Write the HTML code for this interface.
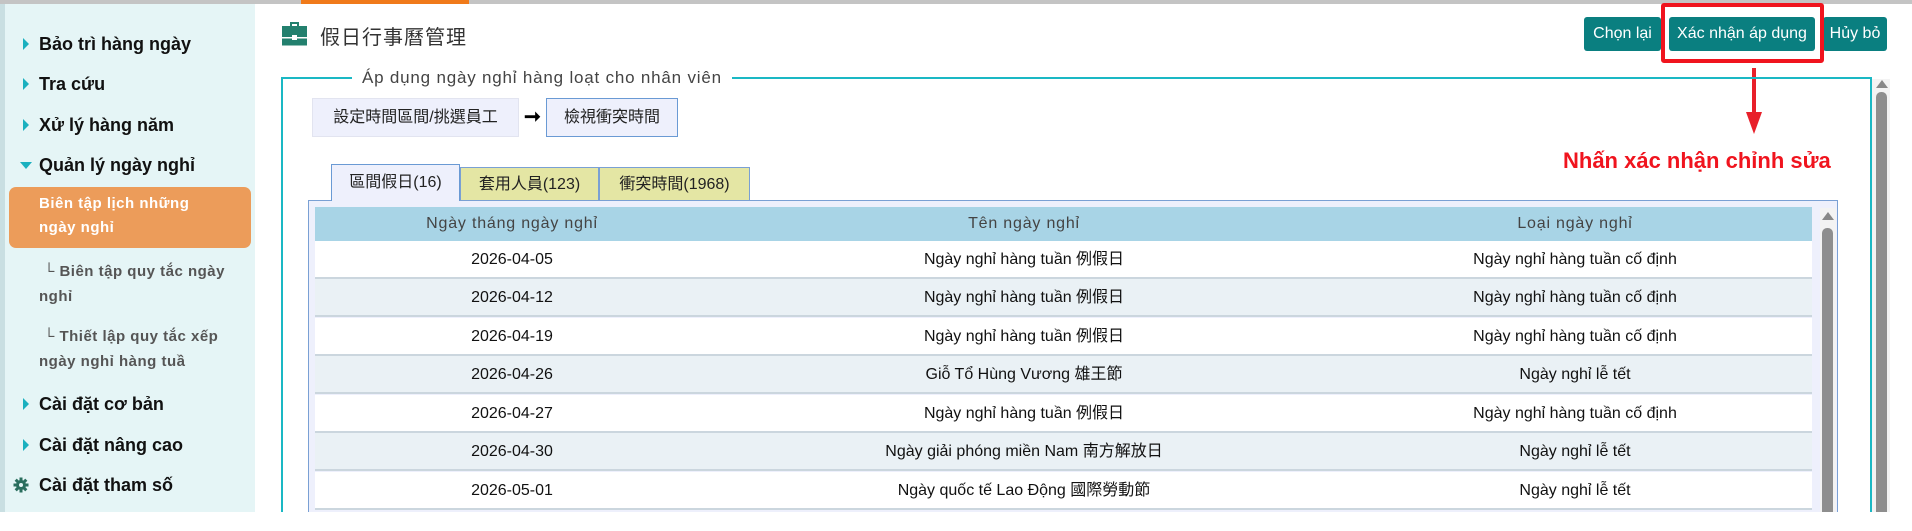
<!DOCTYPE html>
<html><head><meta charset="utf-8"><style>
*{margin:0;padding:0;box-sizing:border-box}
html,body{width:1912px;height:531px;overflow:hidden;background:#fff}
body{font-family:"Liberation Sans","Noto Sans CJK TC",sans-serif;position:relative}
#w{position:absolute;left:0;top:0;width:1912px;height:512px;overflow:hidden}
.a{position:absolute;white-space:nowrap}
.side{position:absolute;left:0;top:4px;width:255px;height:508px;background:#e5f5f6;border-left:5px solid #c9dfe2}
.mi{position:absolute;left:34px;font-size:18px;font-weight:bold;color:#111;line-height:20px}
.tri{position:absolute;left:-16px;top:4px;width:0;height:0;border-top:6px solid transparent;border-bottom:6px solid transparent;border-left:6px solid #1ab0bf}
.sub{position:absolute;left:34px;font-size:15px;font-weight:bold;color:#555;line-height:25px;letter-spacing:.5px}
.btn{position:absolute;top:17px;height:34px;background:#0a7f80;color:#fff;font-size:16px;line-height:34px;text-align:center;border-radius:3px}
.row{position:absolute;left:315px;width:1497px;height:38px;border-bottom:2px solid #cbd6de;font-size:16px;color:#111}
.row span,.hd span{position:absolute;top:0;width:600px;text-align:center;line-height:38px}
.c1{left:-103px}.c2{left:409px}.c3{left:960px}
</style></head><body><div id="w">
<div class="a" style="left:0;top:0;width:1912px;height:4px;background:#c4c4c4"></div>
<div class="a" style="left:301px;top:0;width:168px;height:4px;background:#f07a1a"></div>
<div class="side">
<div class="mi" style="top:30px"><i class="tri"></i>Bảo trì hàng ngày</div>
<div class="mi" style="top:70px"><i class="tri"></i>Tra cứu</div>
<div class="mi" style="top:111px"><i class="tri"></i>Xử lý hàng năm</div>
<div class="mi" style="top:151px"><i class="tri" style="border-left:6px solid transparent;border-right:6px solid transparent;border-top:7px solid #1ab0bf;border-bottom:0;top:7px;left:-19px"></i>Quản lý ngày nghỉ</div>
<div class="a" style="left:4px;top:183px;width:242px;height:61px;background:#ec9c5a;border-radius:7px"></div>
<div class="sub" style="top:188px;color:#fff;line-height:24px">Biên tập lịch những<br>ngày nghỉ</div>
<div class="sub" style="top:255px">&nbsp;└ Biên tập quy tắc ngày<br>nghỉ</div>
<div class="sub" style="top:320px">&nbsp;└ Thiết lập quy tắc xếp<br>ngày nghỉ hàng tuầ</div>
<div class="mi" style="top:390px"><i class="tri"></i>Cài đặt cơ bản</div>
<div class="mi" style="top:431px"><i class="tri"></i>Cài đặt nâng cao</div>
<div class="mi" style="top:471px">Cài đặt tham số</div>
<svg class="a" style="left:8px;top:473px" width="16" height="16" viewBox="0 0 16 16"><g fill="#2a6e5e"><circle cx="8" cy="8" r="5"/><rect x="6.5" y="0.5" width="3" height="15"/><rect x="0.5" y="6.5" width="15" height="3"/><rect x="6.5" y="0.5" width="3" height="15" transform="rotate(45 8 8)"/><rect x="6.5" y="0.5" width="3" height="15" transform="rotate(-45 8 8)"/></g><circle cx="8" cy="8" r="2" fill="#e5f5f6"/></svg>
</div>
<svg class="a" style="left:282px;top:21px" width="25" height="25" viewBox="0 0 25 25"><path d="M8 1h9v4h-2V3H10v2H8z" fill="#23806e"/><rect x="0" y="5" width="25" height="11" fill="#23806e"/><rect x="0" y="17.5" width="25" height="7" fill="#23806e"/><rect x="10" y="14" width="5" height="5" fill="#fff"/></svg>
<div class="a" style="left:320px;top:21px;font-size:20px;color:#333;letter-spacing:1px">假日行事曆管理</div>
<div class="btn" style="left:1584px;width:77px">Chọn lại</div>
<div class="btn" style="left:1669px;width:146px">Xác nhận áp dụng</div>
<div class="btn" style="left:1823px;width:64px">Hủy bỏ</div>
<div class="a" style="left:1661px;top:3px;width:163px;height:60px;border:4px solid #f0141e;border-radius:3px"></div>
<div class="a" style="left:1752px;top:68px;width:4px;height:48px;background:#e8202a"></div>
<div class="a" style="left:1746px;top:112px;width:0;height:0;border-left:8px solid transparent;border-right:8px solid transparent;border-top:22px solid #e8202a"></div>
<div class="a" style="left:1563px;top:148px;font-size:22px;font-weight:bold;color:#f0141e">Nhấn xác nhận chỉnh sửa</div>
<div class="a" style="left:281px;top:77px;width:1591px;height:460px;border:2px solid #1ab8c4"></div>
<div class="a" style="left:352px;top:66px;padding:0 10px;background:#fff;font-size:17px;color:#444;letter-spacing:.8px;line-height:24px">Áp dụng ngày nghỉ hàng loạt cho nhân viên</div>
<div class="a" style="left:1872px;top:79px;width:18px;height:440px;background:#f3f3f3"></div>
<div class="a" style="left:1876px;top:80px;width:0;height:0;border-left:6px solid transparent;border-right:6px solid transparent;border-bottom:8px solid #888"></div>
<div class="a" style="left:1876px;top:92px;width:11px;height:440px;background:#8e8e8e;border-radius:5px"></div>
<div class="a" style="left:312px;top:98px;width:207px;height:39px;background:#eef0fc;border:1px solid #e2e4f0;font-size:16px;line-height:37px;text-align:center;color:#222">設定時間區間/挑選員工</div>
<div class="a" style="left:524px;top:104px;font-size:20px;font-weight:bold">➞</div>
<div class="a" style="left:546px;top:98px;width:132px;height:39px;background:#eef0fc;border:1px solid #6a9ad4;font-size:16px;line-height:37px;text-align:center;color:#222">檢視衝突時間</div>
<div class="a" style="left:331px;top:164px;width:129px;height:37px;background:#eef0fc;border:1px solid #6a9ad4;border-bottom:0;font-size:16px;line-height:36px;text-align:center;color:#222;z-index:2">區間假日(16)</div>
<div class="a" style="left:460px;top:167px;width:139px;height:33px;background:#e4e6a4;border:1px solid #7aa0d4;border-bottom:0;font-size:16px;line-height:33px;text-align:center;color:#222">套用人員(123)</div>
<div class="a" style="left:599px;top:167px;width:151px;height:33px;background:#e4e6a4;border:1px solid #7aa0d4;border-bottom:0;font-size:16px;line-height:33px;text-align:center;color:#222">衝突時間(1968)</div>
<div class="a" style="left:308px;top:200px;width:1530px;height:340px;background:#eef0fc;border:1px solid #7aa0d4"></div>
<div class="a" style="left:1820px;top:208px;width:16px;height:320px;background:#f3f3f3"></div>
<div class="a" style="left:1822px;top:212px;width:0;height:0;border-left:6px solid transparent;border-right:6px solid transparent;border-bottom:8px solid #888"></div>
<div class="a" style="left:1822px;top:228px;width:11px;height:300px;background:#8e8e8e;border-radius:5px"></div>
<div class="hd a" style="left:315px;top:207px;width:1497px;height:34px;background:#a8d4e6;font-size:16px;color:#444;letter-spacing:.8px"><span class="c1" style="line-height:34px">Ngày tháng ngày nghỉ</span><span class="c2" style="line-height:34px">Tên ngày nghỉ</span><span class="c3" style="line-height:34px">Loại ngày nghỉ</span></div>
<div class="row" style="top:241px;background:#fff"><span class="c1">2026-04-05</span><span class="c2">Ngày nghỉ hàng tuần 例假日</span><span class="c3">Ngày nghỉ hàng tuần cố định</span></div>
<div class="row" style="top:279px;background:#eaf1f5"><span class="c1">2026-04-12</span><span class="c2">Ngày nghỉ hàng tuần 例假日</span><span class="c3">Ngày nghỉ hàng tuần cố định</span></div>
<div class="row" style="top:318px;background:#fff"><span class="c1">2026-04-19</span><span class="c2">Ngày nghỉ hàng tuần 例假日</span><span class="c3">Ngày nghỉ hàng tuần cố định</span></div>
<div class="row" style="top:356px;background:#eaf1f5"><span class="c1">2026-04-26</span><span class="c2">Giỗ Tổ Hùng Vương 雄王節</span><span class="c3">Ngày nghỉ lễ tết</span></div>
<div class="row" style="top:395px;background:#fff"><span class="c1">2026-04-27</span><span class="c2">Ngày nghỉ hàng tuần 例假日</span><span class="c3">Ngày nghỉ hàng tuần cố định</span></div>
<div class="row" style="top:433px;background:#eaf1f5"><span class="c1">2026-04-30</span><span class="c2">Ngày giải phóng miền Nam 南方解放日</span><span class="c3">Ngày nghỉ lễ tết</span></div>
<div class="row" style="top:472px;background:#fff"><span class="c1">2026-05-01</span><span class="c2">Ngày quốc tế Lao Động 國際勞動節</span><span class="c3">Ngày nghỉ lễ tết</span></div>
</div></body></html>
